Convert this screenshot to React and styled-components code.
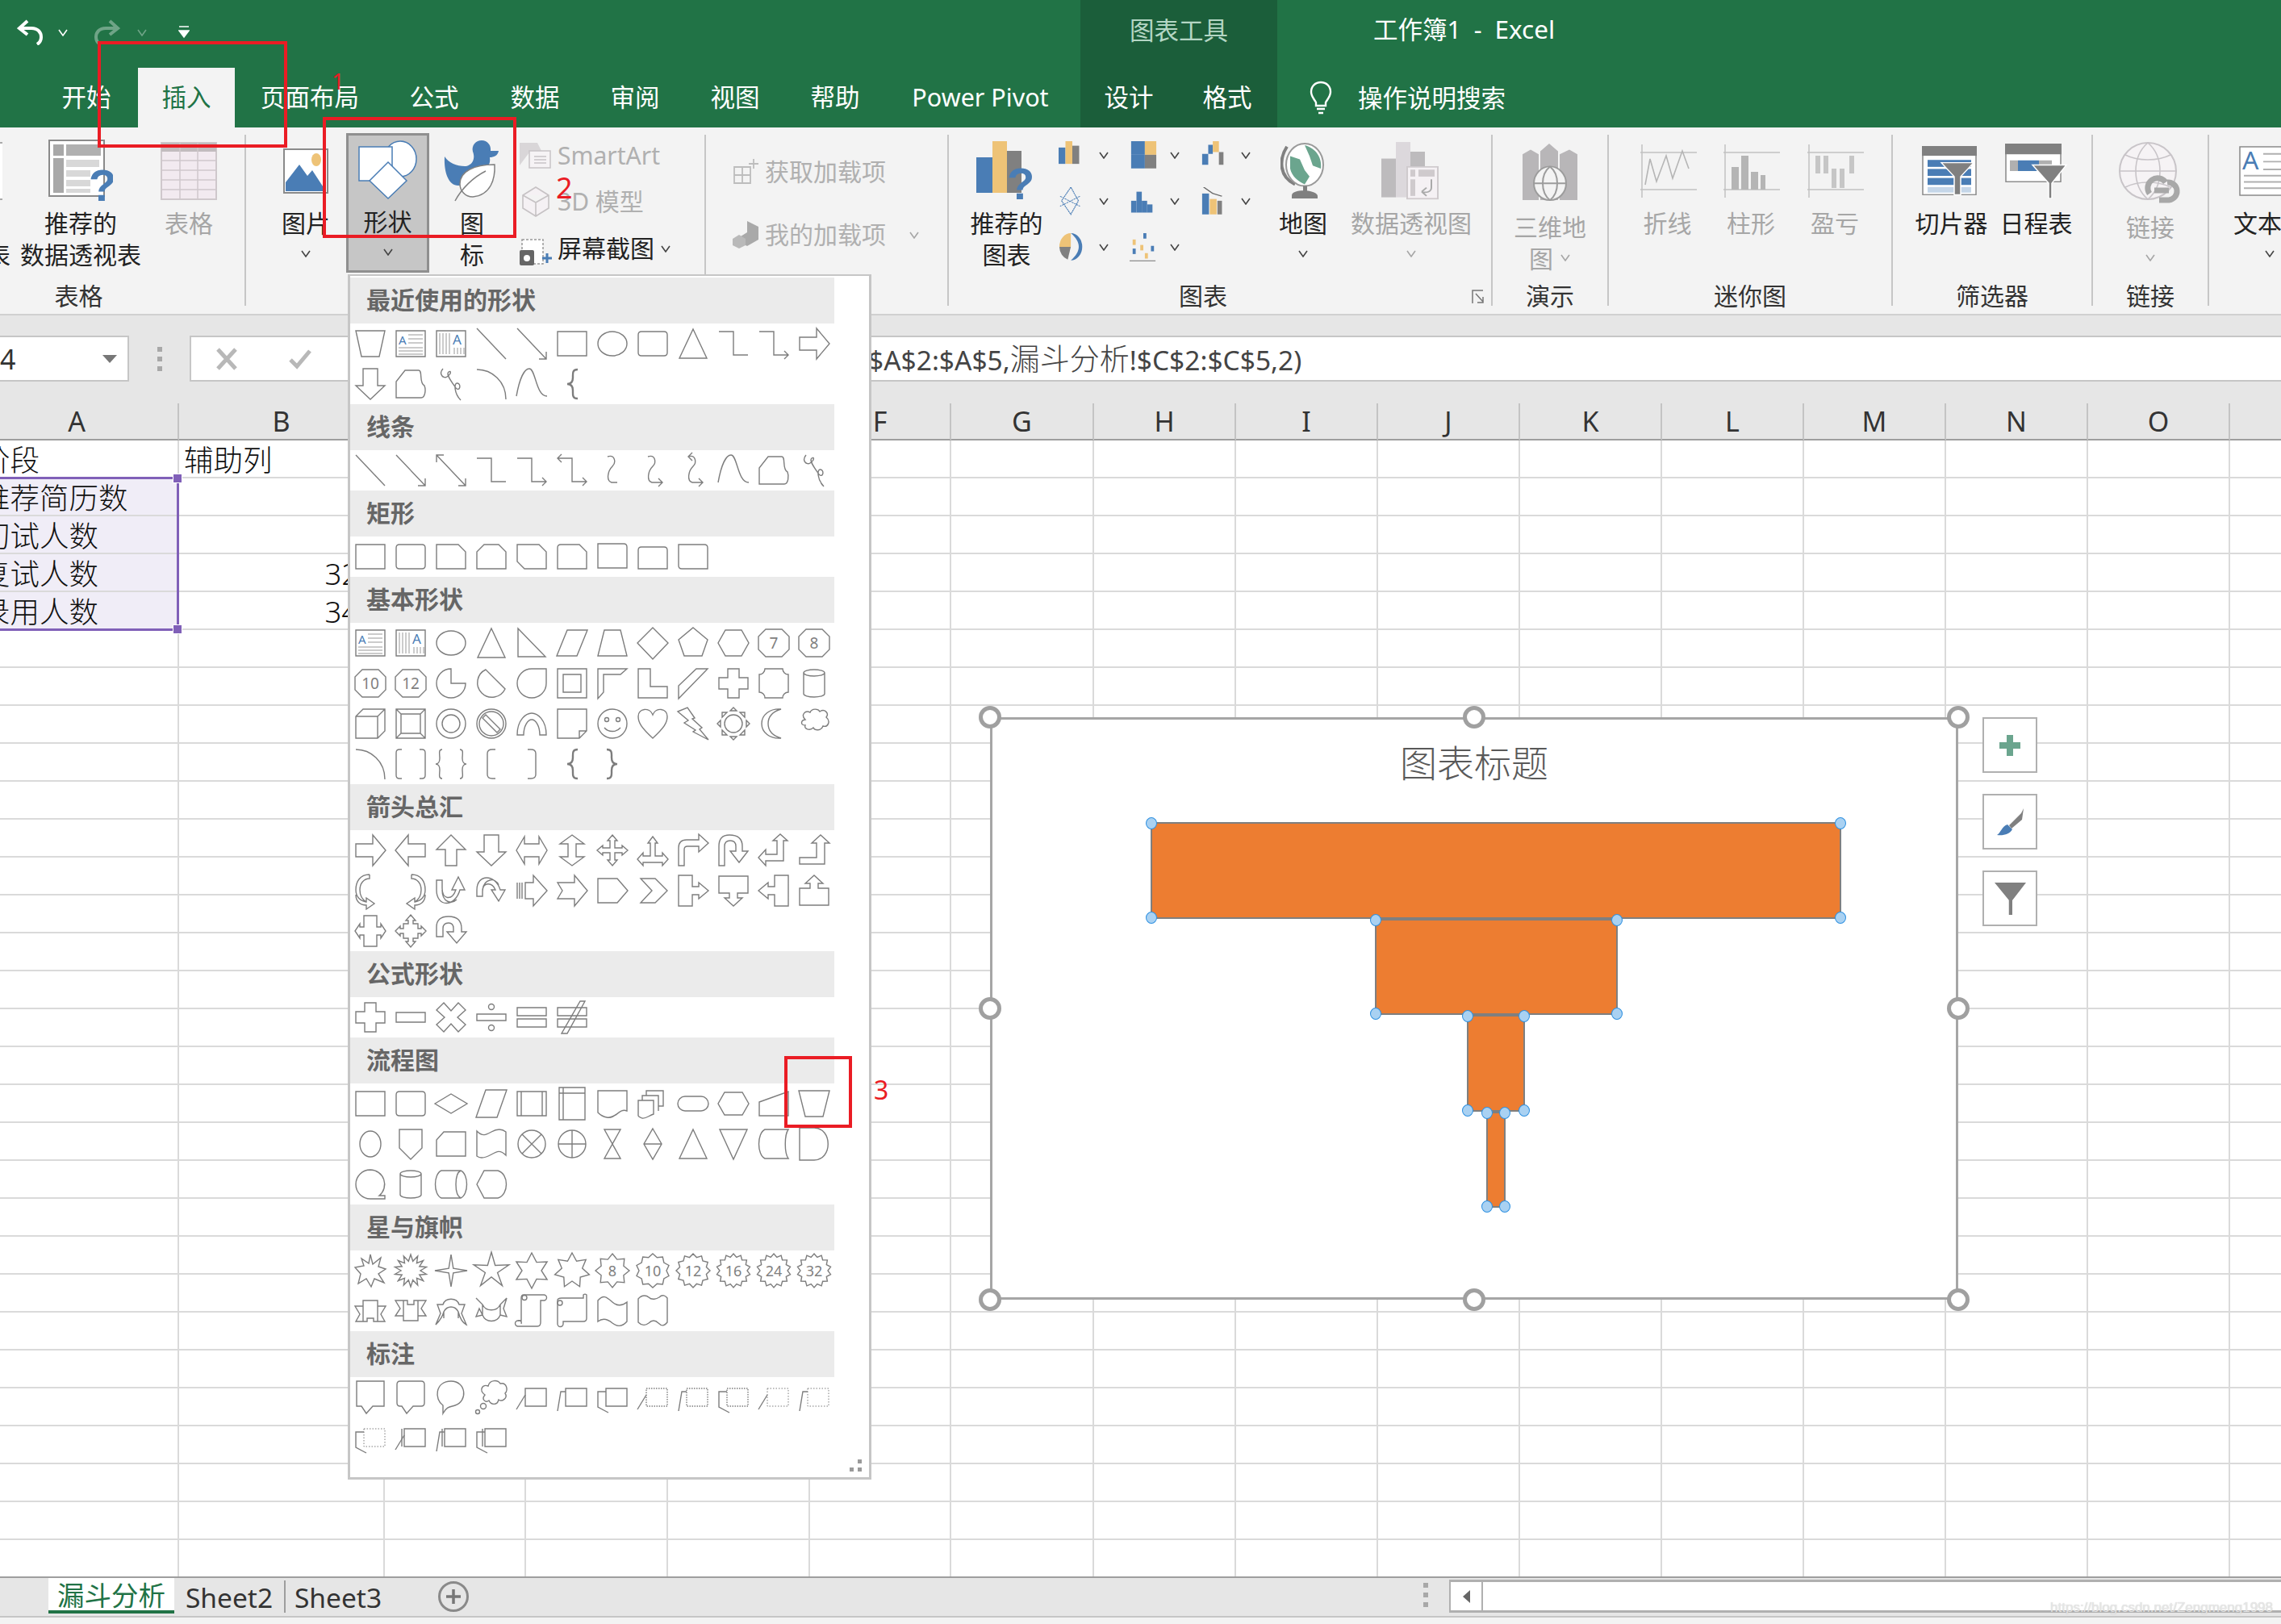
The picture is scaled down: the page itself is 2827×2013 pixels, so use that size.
import React from 'react';
import styled, { createGlobalStyle } from 'styled-components';

const GlobalStyle = createGlobalStyle`
  html, body { margin: 0; padding: 0; background: #fff; }
  body {
    width: 2827px;
    height: 2013px;
    overflow: hidden;
    font-family: "Noto Sans", "Noto Sans CJK SC", sans-serif;
  }
`;

const BLUE = '#4a7db5';
const YELLOW = '#eec377';
const GRAY = '#808080';
const GREEN = '#6ba58e';

// ---------- shape gallery ----------

const star = (n, R, r, cx = 25, cy = 25) => {
  let d = '';
  for (let i = 0; i < n * 2; i++) {
    const a = (Math.PI * i) / n - Math.PI / 2;
    const rad = i % 2 ? r : R;
    d += `${i ? 'L' : 'M'}${(cx + rad * Math.cos(a)).toFixed(1)} ${(cy + rad * Math.sin(a)).toFixed(1)}`;
  }
  return d + 'Z';
};

const RECT = 'M7 10H43V40H7Z';
const ROUND = 'M11 10H39Q43 10 43 14V36Q43 40 39 40H11Q7 40 7 36V14Q7 10 11 10Z';
const TRI = 'M25 7L42 43H8Z';
const LBRACE = 'M32 7C25 7 26 12 26 17C26 22 24 25 19 25C24 25 26 28 26 33C26 38 25 43 32 43';
const RBRACE = 'M18 7C25 7 24 12 24 17C24 22 26 25 31 25C26 25 24 28 24 33C24 38 25 43 18 43';
const SCRIBBLE = 'M15 6C9 13 16 19 20 16C26 12 25 8 22 10C18 13 27 24 31 30C36 35 38 25 33 24C28 23 29 37 37 45';
const FREEFORM = 'M7 42V22L18 8H35C40 8 35 24 42 27C44 32 43 42 38 42Z';
const SCURVE = 'M6 40C10 18 16 6 22 6C30 6 30 40 44 40';
const ARC = 'M7 7C26 7 43 22 43 44';
const CLOUD = 'M14 20C8 14 14 8 20 11C22 6 30 6 32 10C38 6 44 12 40 17C46 22 42 30 36 28C34 34 26 34 24 30C20 34 12 32 14 27C8 27 8 21 14 20Z';

const CanShape = () => <path d="M12 12A13 4 0 0 1 38 12V38A13 4 0 0 1 12 38ZM12 12A13 4 0 0 0 38 12" />;

const TextBox = () => (
  <>
    <path d="M7 9H43V41H7Z" />
    <text x="10" y="26" fontSize="15" fill={BLUE} stroke="none" fontFamily="Noto Sans">A</text>
    <path d="M22 14H40M22 19H40M22 24H40M10 30H40M10 34H40M10 38H40" strokeWidth="0.8" />
  </>
);

const VertBox = () => (
  <>
    <path d="M7 9H43V41H7Z" />
    <text x="27" y="26" fontSize="17" fill={BLUE} stroke="none" fontFamily="Noto Sans">A</text>
    <path d="M11 12V38M15 12V38M19 12V38M23 12V38M29 30V38M33 30V38M37 30V38M41 30V38" strokeWidth="0.8" />
  </>
);

const NumOct = ({ n }) => (
  <>
    <path d="M15 8H35L44 17V33L35 42H15L6 33V17Z" />
    <text x="25" y="32" fontSize="19" textAnchor="middle" fill={GRAY} stroke="none" fontFamily="Noto Sans">{n}</text>
  </>
);

const NumStar = ({ pts, n, r = 17 }) => (
  <>
    <path d={star(pts, 21, r)} />
    <text x="25" y="32" fontSize="18" textAnchor="middle" fill={GRAY} stroke="none" fontFamily="Noto Sans">{n}</text>
  </>
);

const LineCallout = ({ kind, box, bar }) => {
  const leader = {
    1: 'M17 22L6 40',
    2: 'M17 18H11L7 42',
    3: 'M17 18H7V37L20 44',
  }[kind];
  const dash = box === 'dot' ? '1.5 1.5' : box === 'light' ? '1.5 2' : undefined;
  return (
    <>
      <path d="M17 14H43V36H17Z" strokeDasharray={dash} strokeWidth={box === 'light' ? 1 : undefined} />
      {bar && <path d="M14 14V36" />}
      <path d={leader} />
    </>
  );
};

const shapes = {
  trap: <path d="M7 9H43L36 41H14Z" />,
  text: <TextBox />,
  vtext: <VertBox />,
  line: <path d="M7 6L43 44" />,
  lineA: <path d="M7 6L43 44M43 35V44H34" />,
  lineD: <path d="M7 6L43 44M43 35V44H34M7 15V6H16" />,
  rect: <path d={RECT} />,
  round: <path d={ROUND} />,
  ellipse: <ellipse cx="25" cy="25" rx="18" ry="15" />,
  tri: <path d={TRI} />,
  elbow: <path d="M7 10H25V39H43" />,
  elbowA: <path d="M7 10H25V39H43M38 34L43 39L38 44" />,
  elbowD: <path d="M7 10H25V39H43M38 34L43 39L38 44M12 5L7 10L12 15" />,
  right: <path d="M7 17H28V6L44 25L28 44V33H7Z" />,
  left: <path d="M43 17H22V6L6 25L22 44V33H43Z" />,
  up: <path d="M25 6L43 24H32V44H18V24H7Z" />,
  down: <path d="M16 6H34V27H43L25 44L7 27H16Z" />,
  free: <path d={FREEFORM} />,
  scrib: <path d={SCRIBBLE} />,
  arc: <path d={ARC} />,
  scurve: <path d={SCURVE} />,
  lb: <path d={LBRACE} strokeWidth="2.4" />,
  rb: <path d={RBRACE} strokeWidth="2.4" />,
  curve: <path d="M19 8C28 5 30 15 25 20C19 26 17 38 24 40H31" />,
  curveA: <path d="M19 8C28 5 30 15 25 20C19 26 17 38 24 40H37M32 35L37 40L32 45" />,
  curveD: <path d="M19 8C28 5 30 15 25 20C19 26 17 38 24 40H37M32 35L37 40L32 45M24 3L19 8L24 13" />,
  snip1: <path d="M7 10H34L43 19V40H7Z" />,
  snip2: <path d="M16 10H34L43 19V40H7V19Z" />,
  snipD: <path d="M7 10H34L43 19V40H16L7 31Z" />,
  snipR: <path d="M11 10H34L43 19V40H7V14Q7 10 11 10Z" />,
  round1: <path d="M7 9H39Q43 9 43 13V39H7Z" />,
  round2: <path d="M11 13H39Q43 13 43 17V40H7V17Q7 13 11 13Z" />,
  roundD: <path d="M7 10H39Q43 10 43 14V40H11Q7 40 7 36Z" />,
  rtTri: <path d="M8 7L42 42H8Z" />,
  para: <path d="M6 41L19 9H44L31 41Z" />,
  trapz: <path d="M7 41L15 9H35L43 41Z" />,
  diamond: <path d="M25 6L44 25L25 45L6 25Z" />,
  penta: <path d="M25 6L43 21L36 41H14L7 21Z" />,
  hexa: <path d="M15 9H35L44 25L35 41H15L6 25Z" />,
  o7: <NumOct n="7" />,
  o8: <NumOct n="8" />,
  o10: <NumOct n="10" />,
  o12: <NumOct n="12" />,
  pie: <path d="M25 7A18 18 0 1 0 43 25H25Z" />,
  chord: <path d="M18 8A18 18 0 1 0 42 32Z" />,
  drop: <path d="M43 7V25A18 18 0 1 1 25 7Z" />,
  frame: <path d="M7 7H43V43H7ZM14 14H36V36H14Z" />,
  half: <path d="M7 44V7H43L35 14H14V36Z" />,
  lshape: <path d="M7 7H22V29H43V43H7Z" />,
  diag: <path d="M7 44V28L29 7H43Z" />,
  plus: <path d="M18 7H32V18H43V32H32V43H18V32H7V18H18Z" />,
  plaque: <path d="M14 7H36A7 7 0 0 0 43 14V36A7 7 0 0 0 36 43H14A7 7 0 0 0 7 36V14A7 7 0 0 0 14 7Z" />,
  can: <CanShape />,
  cube: <path d="M7 16L16 7H43V34L34 43H7ZM7 16H34V43M34 16L43 7" />,
  bevel: <path d="M7 7H43V43H7ZM13 13H37V37H13ZM7 7L13 13M43 7L37 13M7 43L13 37M43 43L37 37" />,
  donut: <><circle cx="25" cy="25" r="18" /><circle cx="25" cy="25" r="11" /></>,
  no: <><circle cx="25" cy="25" r="18" /><circle cx="25" cy="25" r="15" /><path d="M14 18L18 14L36 32L32 36Z" /></>,
  block: <path d="M7 39C7 20 18 12 25 12C32 12 43 20 43 39H35C35 28 30 20 25 20C20 20 15 28 15 39Z" />,
  fold: <path d="M7 7H43V34L34 43H7ZM43 34H34V43" />,
  smile: <><circle cx="25" cy="25" r="18" /><circle cx="18" cy="20" r="2.5" /><circle cx="32" cy="20" r="2.5" /><path d="M15 30C20 36 30 36 35 30" /></>,
  heart: <path d="M25 43C11 30 7 24 7 16C7 6 21 4 25 14C29 4 43 6 43 16C43 24 39 30 25 43Z" />,
  bolt: <path d="M6 10L18 5L27 18L24 19L36 30L33 32L44 45L25 35L28 33L14 24L19 21Z" />,
  sun: <><circle cx="25" cy="25" r="11" /><path d="M25 5L29 9H21ZM25 45L29 41H21ZM5 25L9 21V29ZM45 25L41 21V29ZM11 11L17 11L11 17ZM39 11L33 11L39 17ZM11 39L17 39L11 33ZM39 39L33 39L39 33Z" /></>,
  moon: <path d="M34 7C24 10 18 16 18 25C18 34 24 40 34 43C20 44 10 36 10 25C10 14 20 6 34 7Z" />,
  cloud: <path d={CLOUD} />,
  brackets: <path d="M14 7H11Q7 7 7 11V39Q7 43 11 43H14M36 7H39Q43 7 43 11V39Q43 43 39 43H36" />,
  braces: <path d="M14 7C9 7 11 13 11 18C11 22 9 25 6 25C9 25 11 28 11 32C11 37 9 43 14 43M36 7C41 7 39 13 39 18C39 22 41 25 44 25C41 25 39 28 39 32C39 37 41 43 36 43" />,
  lbkt: <path d="M30 7H26Q20 7 20 12V38Q20 43 26 43H30" />,
  rbkt: <path d="M20 7H24Q30 7 30 12V38Q30 43 24 43H20" />,
  lr: <path d="M6 25L16 8V17H34V8L44 25L34 42V33H16V42Z" />,
  ud: <path d="M25 6L40 17H30V33H40L25 44L10 33H20V17H10Z" />,
  quad: <path d="M25 6L31 13H28V22H37V19L44 25L37 31V28H28V37H31L25 44L19 37H22V28H13V31L6 25L13 19V22H22V13H19Z" />,
  lru: <path d="M25 8L31 16H28V32H37V28L44 36L37 44V40H13V44L6 36L13 28V32H22V16H19Z" />,
  bent: <path d="M7 44V22Q7 12 17 12H32V5L44 16L32 27V20H18Q14 20 14 24V44Z" />,
  uturn: <path d="M7 44V20Q7 6 20 6Q36 6 36 20V26H43L32 40L21 26H28V20Q28 13 21 13Q14 13 14 20V44Z" />,
  leftup: <path d="M6 34L15 24V30H29V13H24L33 5L42 13H37V38H15V44Z" />,
  bentup: <path d="M7 42V34H28V16H22L33 6L44 16H38V42Z" />,
  cvR: <path d="M24 5C12 5 7 14 7 24C7 33 13 38 20 39V34L30 41L20 48V43C12 43 7 38 7 30M24 5V10C17 10 12 16 12 24C12 31 15 36 20 39" />,
  cvL: <path d="M26 5C38 5 43 14 43 24C43 33 37 38 30 39V34L20 41L30 48V43C38 43 43 38 43 30M26 5V10C33 10 38 16 38 24C38 31 35 36 30 39" />,
  cvU: <path d="M7 12V24C7 46 30 46 36 24H42L34 8L26 24H31C26 38 14 36 14 22V12ZM14 24C14 40 26 42 32 36" />,
  cvD: <path d="M7 32V24C7 4 30 4 36 24H42L34 38L25 24H30C26 14 14 14 14 26V32ZM14 24C16 10 30 8 34 18" />,
  striped: <path d="M17 15H27V6L44 25L27 44V35H17ZM7 15V35M10 15V35M13 15V35" />,
  notch: <path d="M7 15H28V6L44 25L28 44V35H7L13 25Z" />,
  home: <path d="M7 10H31L44 25L31 40H7Z" />,
  chev: <path d="M10 10H28L43 25L28 40H10L24 25Z" />,
  rightC: <path d="M7 6H24V20H32V15L44 25L32 35V30H24V44H7Z" />,
  downC: <path d="M7 7H43V28H30V34H36L25 44L14 34H20V28H7Z" />,
  leftC: <path d="M43 6H26V20H18V15L6 25L18 35V30H26V44H43Z" />,
  upC: <path d="M7 43H43V22H30V16H36L25 6L14 16H20V22H7Z" />,
  lrC: <path d="M17 6H33V20H38V16L44 25L38 34V30H33V44H17V30H12V34L6 25L12 16V20H17Z" />,
  quadC: <path d="M25 5L31 12H28V16H34V22H38V19L44 25L38 31V28H34V34H28V38H31L25 45L19 38H22V34H16V28H12V31L6 25L12 19V22H16V16H22V12H19Z" />,
  circ: <path d="M7 32V20Q7 7 22 7Q38 7 38 22V26H44L32 40L20 26H28V22Q28 15 22 15Q15 15 15 22V32Z" />,
  minus: <path d="M7 19H43V31H7Z" />,
  times: <path d="M16 7L25 17L34 7L43 16L33 25L43 34L34 43L25 33L16 43L7 34L17 25L7 16Z" />,
  divide: <><path d="M7 21H43V29H7Z" /><circle cx="25" cy="12" r="3.5" /><circle cx="25" cy="38" r="3.5" /></>,
  equal: <path d="M7 13H43V23H7ZM7 27H43V37H7Z" />,
  noteq: <path d="M7 13H43V23H7ZM7 27H43V37H7ZM35 5L41 5L19 45H12Z" />,
  decision: <path d="M5 25L25 13L45 25L25 37Z" />,
  data: <path d="M6 42L18 8H44L32 42Z" />,
  predef: <path d="M7 10H43V40H7ZM12 10V40M38 10V40" />,
  internal: <path d="M9 5H41V45H9ZM9 12H41M14 5V45" />,
  doc: <path d="M7 9H43V34C33 30 30 44 18 42C12 41 9 38 7 36Z" />,
  multi: <path d="M7 21H26V38C20 40 16 44 12 43C10 42 8 42 7 40ZM12 21V15H32V34M17 15V9H38V28H32" />,
  term: <path d="M15 16H35A9 9 0 0 1 35 34H15A9 9 0 0 1 15 16Z" />,
  prep: <path d="M14 11H36L44 25L36 39H14L6 25Z" />,
  manIn: <path d="M7 23L43 10V40H7Z" />,
  manOp: <path d="M6 9H44L36 41H14Z" />,
  conn: <ellipse cx="25" cy="25" rx="13" ry="16" />,
  off: <path d="M11 7H39V30L25 44L11 30Z" />,
  card: <path d="M16 10H43V40H7V20Z" />,
  tape: <path d="M7 9C14 16 18 14 25 10C32 6 38 6 43 10V39C36 32 32 34 25 38C18 42 12 44 7 40Z" />,
  sumj: <><circle cx="25" cy="25" r="17" /><path d="M13 13L37 37M37 13L13 37" /></>,
  or: <><circle cx="25" cy="25" r="17" /><path d="M25 8V42M8 25H42" /></>,
  collate: <path d="M15 7H35L15 43H35Z" />,
  sort: <path d="M25 6L36 25L25 44L14 25ZM14 25H36" />,
  merge: <path d="M8 7H42L25 44Z" />,
  stored: <path d="M14 7H43C38 14 38 36 43 43H14C4 38 4 12 14 7Z" />,
  delay: <path d="M7 5H25C48 5 48 45 25 45H7Z" />,
  seq: <path d="M25 7A18 18 0 1 0 25 43H43V39H36A18 18 0 0 0 25 7Z" />,
  direct: <path d="M13 8H37C47 12 47 38 37 42H13C3 38 3 12 13 8ZM37 8C29 12 29 38 37 42" />,
  display: <path d="M7 25L16 8H33C47 12 47 38 33 42H16Z" />,
  burst1: <path d="M25 5L28 17L38 9L35 20L44 23L35 29L42 40L30 35L26 45L20 35L10 41L13 29L6 21L17 19L14 10L23 16Z" />,
  burst2: <path d={star(14, 20, 12)} />,
  s4: <path d={star(4, 20, 4)} />,
  s5: <path d={star(5, 23, 8)} />,
  s6: <path d={star(6, 22, 12)} />,
  s7: <path d={star(7, 22, 13)} />,
  s8: <NumStar pts={8} n="8" r={15} />,
  s10: <NumStar pts={10} n="10" />,
  s12: <NumStar pts={12} n="12" />,
  s16: <NumStar pts={14} n="16" />,
  s24: <NumStar pts={14} n="24" />,
  s32: <NumStar pts={14} n="32" />,
  ribD: <path d="M16 19H6L12 29L7 38H16M34 19H44L38 29L43 38H34M16 12H34V38H29V34H21V38H16Z" />,
  ribU: <path d="M16 12H6L12 22L6 31H16M34 12H44L38 22L44 31H34M16 12H21V17H29V12H34V37H16Z" />,
  ribCD: <path d="M16 26C14 34 8 40 6 42L12 28L8 17H15C18 8 32 8 35 17H42L38 28L44 42C40 40 36 34 34 26C30 18 20 18 16 26ZM16 26V34M34 26V34" />,
  ribCU: <path d="M6 9L14 17V30C18 40 32 40 36 30V17L44 9L40 22L44 32L36 30M14 30L6 32L10 22ZM14 17C18 26 32 26 36 17" />,
  scrollV: <><path d="M15 5H40A3 3 0 0 1 40 12H36V39Q36 44 32 44H8A3 3 0 0 1 8 37H12V9Q12 5 15 5Z" /><circle cx="16" cy="8.5" r="3" /><path d="M8 37A3 3 0 0 1 12 41" /></>,
  scrollH: <><path d="M7 12Q7 9 12 9H39V5A3 3 0 0 1 43 5V34Q43 38 39 38H14V41A3 3 0 0 1 7 41Z" /><circle cx="10" cy="15" r="3" /></>,
  wave: <path d="M7 12C14 4 18 8 25 14C32 20 38 18 43 14V38C36 46 30 44 25 40C18 34 12 34 7 38Z" />,
  dbl: <path d="M7 10C12 4 18 6 20 8C24 12 30 10 33 8C37 4 41 6 43 9V39C39 44 36 44 32 40C28 36 24 36 20 40C15 44 10 42 7 39Z" />,
  callR: <path d="M8 5H42V36H28L20 45L14 36H8Z" />,
  callRd: <path d="M12 5H38Q42 5 42 9V32Q42 36 38 36H28L20 45L14 36H12Q8 36 8 32V9Q8 5 12 5Z" />,
  callO: <path d="M15 35C4 28 5 5 25 5C44 5 46 30 30 35C24 37 20 36 15 45Z" />,
  callC: <><path d="M17 22C9 16 14 8 21 11C23 3 33 3 36 8C44 6 46 16 42 20C46 26 38 31 34 28C32 36 24 34 22 29C18 32 12 28 17 22Z" /><circle cx="15" cy="36" r="3.5" /><circle cx="8" cy="43" r="2.5" /></>,
  c1: <LineCallout kind={1} />,
  c2: <LineCallout kind={2} />,
  c3: <LineCallout kind={3} />,
  d1: <LineCallout kind={1} box="dot" />,
  d2: <LineCallout kind={2} box="dot" />,
  d3: <LineCallout kind={3} box="dot" />,
  l1: <LineCallout kind={1} box="light" />,
  l2: <LineCallout kind={2} box="light" />,
  l3: <LineCallout kind={3} box="light" />,
  b1: <LineCallout kind={1} bar />,
  b2: <LineCallout kind={2} bar />,
  b3: <LineCallout kind={3} bar />,
};

const sections = [
  { title: '最近使用的形状', items: 'trap text vtext line lineA rect ellipse round tri elbow elbowA right down free scrib arc scurve lb' },
  { title: '线条', items: 'line lineA lineD elbow elbowA elbowD curve curveA curveD scurve free scrib' },
  { title: '矩形', items: 'rect round snip1 snip2 snipD snipR round1 round2 roundD' },
  { title: '基本形状', items: 'text vtext ellipse tri rtTri para trapz diamond penta hexa o7 o8 o10 o12 pie chord drop frame half lshape diag plus plaque can cube bevel donut no block fold smile heart bolt sun moon cloud arc brackets braces lbkt rbkt lb rb' },
  { title: '箭头总汇', items: 'right left up down lr ud quad lru bent uturn leftup bentup cvR cvL cvU cvD striped notch home chev rightC downC leftC upC lrC quadC circ' },
  { title: '公式形状', items: 'plus minus times divide equal noteq' },
  { title: '流程图', items: 'rect round decision data predef internal doc multi term prep manIn manOp conn off card tape sumj or collate sort tri merge stored delay seq can direct display' },
  { title: '星与旗帜', items: 'burst1 burst2 s4 s5 s6 s7 s8 s10 s12 s16 s24 s32 ribD ribU ribCD ribCU scrollV scrollH wave dbl' },
  { title: '标注', items: 'callR callRd callO callC c1 c2 c3 d1 d2 d3 l1 l2 l3 b1 b2 b3' },
];

const ShapeMenu = styled.div`
  position: absolute;
  left: 431px;
  top: 340px;
  width: 649px;
  height: 1494px;
  box-sizing: border-box;
  padding-top: 2px;
  background: #fff;
  border: 3px solid #c6c6c6;
  border-top-width: 2px;
`;

const MenuHeader = styled.div`
  width: 600px;
  height: 57px;
  padding-left: 20px;
  box-sizing: border-box;
  background: #ebebeb;
  color: #666;
  font: 700 30px/53px "Noto Sans CJK SC", sans-serif;
`;

const ShapeGrid = styled.div`
  width: 600px;
  display: grid;
  grid-template-columns: repeat(12, 50px);
  grid-auto-rows: 50px;
`;

const ShapeIcon = styled.svg`
  width: 50px;
  height: 50px;
  fill: none;
  stroke: #7d7d7d;
  stroke-width: 1.4;
`;

const Grip = styled.svg`
  position: absolute;
  right: 8px;
  bottom: 6px;
`;

// ---------- ribbon icons ----------

const Chev = styled(({ className, style }) => (
  <svg className={className} style={style} width="14" height="9" viewBox="0 0 14 9">
    <path d="M2 1L7 8L12 1" fill="none" stroke="currentColor" strokeWidth="1.6" />
  </svg>
))`
  flex: none;
  color: ${(p) => (p.$light ? '#fff' : p.$off ? '#a6a6a6' : '#444')};
`;

const RecoPivotIcon = () => (
  <svg width="80" height="78" viewBox="0 0 80 78">
    <rect x="1" y="1" width="68" height="69" fill="#fff" stroke="#8a8a8a" strokeWidth="2" />
    <rect x="6" y="6" width="13" height="14" fill="#a8a8a8" />
    <rect x="22" y="6" width="43" height="14" fill="#b0b0b0" />
    <rect x="6" y="23" width="13" height="43" fill="#a8a8a8" />
    <rect x="22" y="25" width="41" height="9" fill="#d8d8d8" />
    <rect x="22" y="38" width="30" height="8" fill="#d8d8d8" />
    <rect x="22" y="50" width="30" height="8" fill="#d8d8d8" />
    <rect x="22" y="61" width="30" height="5" fill="#d8d8d8" />
    <text x="50" y="76" fontSize="56" fontWeight="700" fill={BLUE} fontFamily="Liberation Sans">?</text>
  </svg>
);

const TableIcon = () => (
  <svg width="70" height="72" viewBox="0 0 70 72">
    <rect x="1" y="1" width="68" height="70" fill="#f2eaf0" stroke="#cfc8cc" strokeWidth="2" />
    <rect x="1" y="1" width="68" height="11" fill="#c2bcbe" />
    <path d="M24 1V71M46 1V71M1 23H69M1 35H69M1 47H69M1 59H69" stroke="#cfc8cc" strokeWidth="1.5" />
  </svg>
);

const PictureIcon = () => (
  <svg width="56" height="56" viewBox="0 0 56 56">
    <rect x="1" y="1" width="54" height="54" fill="#fff" stroke="#8a8a8a" strokeWidth="2" />
    <ellipse cx="41" cy="14" rx="6" ry="8" fill={YELLOW} />
    <path d="M3 53V42L20 20L30 34L36 27L53 53Z" fill={BLUE} />
  </svg>
);

const ShapesIcon = () => (
  <svg width="74" height="74" viewBox="0 0 74 74">
    <ellipse cx="52" cy="23" rx="20" ry="22" fill="#fff" stroke={BLUE} strokeWidth="1.5" />
    <rect x="1" y="8" width="41" height="42" fill="#fff" stroke={BLUE} strokeWidth="1.5" />
    <path d="M37 27L60 50L37 72L14 50Z" fill="#fff" stroke={BLUE} strokeWidth="1.5" />
  </svg>
);

const DuckIcon = () => (
  <svg width="70" height="76" viewBox="0 0 70 76">
    <path d="M36 14C34 6 40 0 47 0C54 0 59 6 58 13L68 13C67 19 62 21 57 21C58 28 56 32 50 36C42 46 30 56 18 56C6 56 0 40 1 20C6 28 16 32 26 32C34 32 40 24 36 14Z" fill={BLUE} />
    <path d="M20 54C20 38 38 30 63 30C64 48 58 68 36 70C26 70 20 62 20 54Z" fill="#fff" stroke="#808080" strokeWidth="1.5" />
    <path d="M14 75C22 60 36 46 52 38" fill="none" stroke="#808080" strokeWidth="1.5" />
  </svg>
);

const SmartArtIcon = () => (
  <svg width="40" height="32" viewBox="0 0 40 32">
    <path d="M0 0H22L28 12H12L0 28Z" fill="#d9d6d8" />
    <rect x="12" y="10" width="26" height="21" fill="#f6f3f5" stroke="#c8c4c6" strokeWidth="1.5" />
    <path d="M18 17H33M18 21H33M18 25H33" stroke="#c8c4c6" strokeWidth="1.5" />
  </svg>
);

const CubeIcon = () => (
  <svg width="34" height="38" viewBox="0 0 34 38">
    <path d="M17 1L33 11V27L17 37L1 27V11ZM1 11L17 20L33 11M17 20V37" fill="#f5f1f4" stroke="#c6c2c4" strokeWidth="1.6" />
  </svg>
);

const ScreenshotIcon = () => (
  <svg width="40" height="34" viewBox="0 0 40 34" style={{ marginTop: 10 }}>
    <rect x="3" y="1" width="26" height="30" fill="#fff" stroke="#999" strokeWidth="1.5" strokeDasharray="3 2" />
    <rect x="0" y="14" width="18" height="19" rx="2" fill="#666" />
    <circle cx="9" cy="24" r="4" fill="#fff" />
    <path d="M28 24H40M34 18V30" stroke={BLUE} strokeWidth="3" />
  </svg>
);

const StoreIcon = () => (
  <svg width="32" height="32" viewBox="0 0 32 32">
    <path d="M2 10H22V30H2ZM2 20H22M12 10V30M26 0V12M20 6H32" fill="none" stroke="#bdbdbd" strokeWidth="1.8" />
  </svg>
);

const AddinIcon = () => (
  <svg width="32" height="34" viewBox="0 0 32 34">
    <path d="M18 0L32 7V23L18 31L10 27V19L18 14Z" fill="#a9a9a9" />
    <path d="M8 17L16 22V30L8 34L0 30V22Z" fill="#b9b9b9" />
  </svg>
);

const RecoChartIcon = () => (
  <svg width="76" height="74" viewBox="0 0 76 74">
    <rect x="0" y="20" width="20" height="44" fill={BLUE} />
    <rect x="20" y="0" width="18" height="64" fill={YELLOW} />
    <rect x="38" y="12" width="18" height="52" fill={GRAY} />
    <text x="38" y="72" fontSize="56" fontWeight="700" fill={BLUE} fontFamily="Liberation Sans">?</text>
  </svg>
);

const bars = (list) => list.map(([x, y, w, h, c], i) => <rect key={i} x={x} y={y} width={w} height={h} fill={c} />);

const miniCharts = [
  bars([[0, 14, 9, 36, BLUE], [9, 0, 9, 50, YELLOW], [18, 10, 9, 40, GRAY]]),
  bars([[2, 0, 18, 30, BLUE], [20, 0, 15, 30, YELLOW], [2, 30, 18, 30, BLUE], [20, 30, 15, 30, GRAY]]),
  bars([[2, 28, 8, 24, BLUE], [10, 8, 6, 20, BLUE], [16, 0, 8, 24, YELLOW], [24, 24, 6, 28, GRAY]]),
  <path key="r" d="M16 0L4 30L16 60L26 30ZM2 20L28 42M28 20L2 42" fill="none" stroke={BLUE} strokeWidth="1.4" strokeDasharray="3 1" />,
  bars([[2, 30, 7, 26, BLUE], [9, 10, 7, 46, BLUE], [16, 30, 7, 26, BLUE], [23, 38, 7, 18, BLUE]]),
  <g key="c">{bars([[2, 14, 9, 46, BLUE], [12, 26, 9, 34, YELLOW], [22, 30, 6, 30, GRAY]])}<path d="M4 0L16 14L28 20" fill="none" stroke="#666" strokeWidth="2" /></g>,
  <g key="p"><path d="M16 0A15 30 0 0 1 16 60C30 40 30 20 16 0Z" fill={BLUE} /><path d="M16 0A15 30 0 0 0 1 30H16Z" fill={YELLOW} /><path d="M1 30A15 30 0 0 0 12 58L16 30Z" fill={GRAY} /></g>,
  <g key="s">{bars([[18, 0, 4, 12, BLUE], [4, 14, 4, 12, YELLOW], [14, 26, 4, 12, YELLOW], [28, 28, 4, 12, BLUE], [4, 34, 4, 12, BLUE], [20, 44, 4, 12, YELLOW]])}<rect x="0" y="60" width="34" height="2" fill={GRAY} /></g>,
];

const MiniChart = ({ i }) => (
  <svg width="34" height="36" viewBox="0 0 36 64" preserveAspectRatio="none">{miniCharts[i]}</svg>
);

const GlobeIcon = () => (
  <svg width="56" height="72" viewBox="0 0 56 74" preserveAspectRatio="none">
    <path d="M8 6C-2 22 -2 44 18 54" fill="none" stroke="#808080" strokeWidth="4" />
    <ellipse cx="30" cy="29" rx="23" ry="27" fill="#fff" stroke="#9a9a9a" strokeWidth="2" />
    <path d="M30 4C44 8 52 20 50 34L40 30L36 18ZM12 18L24 22L30 36L36 44L30 54C22 50 14 44 12 34Z" fill={GREEN} />
    <path d="M14 68C14 60 42 60 46 68V72H14Z" fill="#808080" />
    <rect x="28" y="56" width="5" height="8" fill="#808080" />
  </svg>
);

const PivotChartIcon = () => (
  <svg width="74" height="72" viewBox="0 0 74 84" preserveAspectRatio="none">
    <rect x="0" y="24" width="18" height="56" fill="#bdbbbd" />
    <rect x="18" y="0" width="18" height="80" fill="#dcd8dc" />
    <rect x="36" y="14" width="18" height="66" fill="#bdbbbd" />
    <rect x="32" y="36" width="38" height="46" fill="#f5f1f4" stroke="#cfcacd" strokeWidth="2" />
    <rect x="36" y="40" width="6" height="10" fill="#cfcacd" />
    <rect x="46" y="40" width="20" height="10" fill="#cfcacd" />
    <rect x="36" y="54" width="6" height="24" fill="#cfcacd" />
    <path d="M62 54V66C62 72 56 74 50 72M50 72L56 66M50 72L56 78" fill="none" stroke="#aaa" strokeWidth="2" />
  </svg>
);

const BuildingIcon = () => (
  <svg width="68" height="72" viewBox="0 0 68 76" preserveAspectRatio="none">
    <path d="M0 14L10 8L20 14V74H0ZM22 10L33 0L44 10V74H22ZM46 14L58 8L68 14V74H46Z" fill="#b8b6b8" />
    <ellipse cx="34" cy="52" rx="20" ry="22" fill="#f3f3f3" stroke="#9c9c9c" strokeWidth="2" />
    <path d="M14 52H54M34 30C22 40 22 64 34 74M34 30C46 40 46 64 34 74" fill="none" stroke="#9c9c9c" strokeWidth="2" />
  </svg>
);

const Spark = ({ children }) => (
  <svg width="72" height="66" viewBox="0 0 72 66">
    <path d="M2 10H72M2 56H72M4 0V66" fill="none" stroke="#c2c2c2" strokeWidth="1.5" />
    {children}
  </svg>
);

const SlicerIcon = () => (
  <svg width="74" height="62" viewBox="0 0 74 72" preserveAspectRatio="none">
    <rect x="1" y="12" width="66" height="58" fill="#fff" stroke="#888" strokeWidth="1.5" />
    <rect x="0" y="0" width="68" height="14" fill={GRAY} />
    <rect x="7" y="20" width="54" height="10" fill={BLUE} />
    <rect x="7" y="33" width="54" height="10" fill={BLUE} />
    <rect x="7" y="46" width="54" height="10" fill={BLUE} />
    <rect x="7" y="59" width="54" height="8" fill="#c5d6e8" />
    <path d="M24 24H64L48 44V70H40V44Z" fill={GRAY} stroke="#fff" strokeWidth="1.5" />
  </svg>
);

const TimelineIcon = () => (
  <svg width="78" height="68" viewBox="0 0 78 72" preserveAspectRatio="none">
    <rect x="1" y="10" width="68" height="40" fill="#fff" stroke="#888" strokeWidth="1.5" />
    <rect x="0" y="0" width="70" height="14" fill={GRAY} />
    <rect x="6" y="22" width="10" height="14" fill="#b0b0b0" />
    <rect x="16" y="22" width="26" height="14" fill={BLUE} />
    <rect x="42" y="22" width="16" height="14" fill="#b0b0b0" />
    <path d="M34 28H76L58 52V72H54V52Z" fill={GRAY} stroke="#fff" strokeWidth="1.5" />
  </svg>
);

const LinkIcon = () => (
  <svg width="78" height="76" viewBox="0 0 78 76">
    <ellipse cx="36" cy="36" rx="35" ry="35" fill="#f6f3f5" stroke="#c8c4c8" strokeWidth="2" />
    <path d="M1 36H71M36 1C16 18 16 54 36 71M36 1C56 18 56 54 36 71M8 16C24 24 48 24 64 16M8 56C24 48 48 48 64 56" fill="none" stroke="#c8c4c8" strokeWidth="1.6" />
    <path d="M38 64A11 11 0 0 1 58 50M60 50A11 11 0 0 1 62 72H50M44 60L62 60" fill="none" stroke="#a8a8a8" strokeWidth="7" />
  </svg>
);

const TextIcon = () => (
  <svg width="76" height="62" viewBox="0 0 76 64" preserveAspectRatio="none">
    <rect x="1" y="1" width="74" height="62" fill="#fff" stroke="#888" strokeWidth="1.5" />
    <text x="4" y="30" fontSize="32" fill={BLUE} fontFamily="Noto Sans">A</text>
    <path d="M30 10H70M30 20H70M30 30H70M6 38H70M6 46H70M6 54H70" stroke="#b0b0b0" strokeWidth="2" />
  </svg>
);

// ---------- layout ----------

const Page = styled.div`
  position: relative;
  width: 2827px;
  height: 2013px;
  overflow: hidden;
  display: flex;
  flex-direction: column;
`;

const TitleBar = styled.header`
  background: #217346;
  color: #fff;
  height: 158px;
  font-size: 30.5px;
`;

const TopRow = styled.div`
  height: 84px;
  display: flex;
`;

const QuickAccess = styled.div`
  width: 1339px;
  padding: 24px 0 0 21px;
  box-sizing: border-box;
  display: flex;
  align-items: flex-start;
  color: #fff;
`;

const QatSlot = styled.span`
  display: inline-flex;
  align-items: center;
  height: 32px;
  margin-left: ${(p) => p.$ml || 0}px;
  opacity: ${(p) => (p.$dim ? 0.35 : 1)};
`;

const ContextTitle = styled.div`
  width: 244px;
  background: #1b5e3a;
  color: #b4d6c4;
  text-align: center;
  line-height: 74px;
`;

const WindowTitle = styled.div`
  margin-left: 119px;
  line-height: 72px;
  white-space: pre;
`;

const ExcelWord = styled.span`
  font-size: 31.5px;
`;

const TabRow = styled.nav`
  height: 74px;
  display: flex;
  padding-left: 45px;
`;

const Tab = styled.div`
  width: ${(p) => p.$w || 124}px;
  margin-right: ${(p) => p.$mr || 0}px;
  box-sizing: border-box;
  text-align: center;
  line-height: 72px;
  white-space: nowrap;
  ${(p) => p.$active && 'background:#f3f3f3;color:#217346;margin:0 2px;width:120px;'}
`;

const ContextTabs = styled.div`
  display: flex;
  width: 244px;
  background: #1b5e3a;
  margin-right: 39px;
`;

const SearchHint = styled.div`
  display: flex;
  align-items: center;
  gap: 31px;
  line-height: 72px;
`;

const Ribbon = styled.section`
  height: 231px;
  background: #f3f3f3;
  border-bottom: 2px solid #d0d0d0;
  display: flex;
  overflow: hidden;
`;

const Group = styled.div`
  flex: none;
  position: relative;
  width: ${(p) => p.$w}px;
  height: 212px;
  margin-top: 9px;
  margin-left: ${(p) => p.$ml || 0}px;
  box-sizing: border-box;
  border-right: ${(p) => (p.$last ? 'none' : '2px solid #c6c6c6')};
  display: flex;
  flex-direction: column;
`;

const GroupBody = styled.div`
  display: flex;
  height: 172px;
  padding-left: ${(p) => p.$pl || 0}px;
`;

const GroupLabel = styled.div`
  height: 38px;
  margin-top: auto;
  margin-bottom: -6px;
  text-align: center;
  padding-right: ${(p) => p.$pr || 0}px;
  font: 30px/36px "Noto Sans CJK SC", sans-serif;
  color: #333;
`;

const Launcher = styled.svg`
  position: absolute;
  right: 8px;
  bottom: 2px;
`;

const BigButton = styled.div`
  flex: none;
  width: ${(p) => p.$w}px;
  height: ${(p) => (p.$active ? 173 : 172)}px;
  box-sizing: border-box;
  margin-top: ${(p) => (p.$active ? -2 : 0)}px;
  padding-top: ${(p) => (p.$active ? 2 : 0)}px;
  display: flex;
  flex-direction: column;
  align-items: center;
  font: 30px/39px "Noto Sans CJK SC", sans-serif;
  color: ${(p) => (p.$off ? '#a6a6a6' : '#222')};
  white-space: nowrap;
  ${(p) => p.$active && 'background:#c6c6c6;box-shadow:inset 0 0 0 3px #8f8f8f;'}
`;

const IconSlot = styled.div`
  height: ${(p) => p.$h}px;
  flex: none;
  display: flex;
  align-items: center;
  justify-content: center;
`;

const ButtonLine = styled.div`
  display: flex;
  align-items: center;
  justify-content: center;
  gap: 8px;
  height: 39px;
`;

const Stack = styled.div`
  display: flex;
  flex-direction: column;
  margin: ${(p) => p.$mt || 0}px 0 0 ${(p) => p.$ml || 0}px;
`;

const StackItem = styled.div`
  height: ${(p) => p.$h}px;
  display: flex;
  align-items: center;
  gap: ${(p) => p.$gap}px;
  font: 30px/1 "Noto Sans", "Noto Sans CJK SC", sans-serif;
  color: ${(p) => (p.$off ? '#b0b0b0' : '#222')};
  white-space: nowrap;
`;

const IconBox = styled.span`
  width: ${(p) => p.$w}px;
  display: flex;
  justify-content: center;
  flex: none;
`;

const ChartGrid = styled.div`
  flex: none;
  margin-top: -3px;
  height: 171px;
  display: grid;
  grid-template-columns: repeat(3, 88px);
  grid-auto-rows: 57px;
`;

const ChartCell = styled.div`
  display: flex;
  align-items: center;
  gap: 14px;
`;

const MiniIcon = styled.span`
  width: 36px;
  display: flex;
  align-items: center;
  justify-content: center;
`;

const Spacer = styled.span`
  flex: none;
  width: ${(p) => p.$w}px;
`;

const FormulaBar = styled.section`
  height: 109px;
  flex: none;
  box-sizing: border-box;
  padding-top: 25px;
  background: #e6e6e6;
  display: flex;
  align-items: flex-start;
`;

const NameBox = styled.div`
  width: 160px;
  height: 57px;
  box-sizing: border-box;
  background: #fff;
  border: 2px solid #c6c6c6;
  border-left: none;
  font: 34px/54px "Noto Sans", sans-serif;
  color: #333;
  display: flex;
  align-items: center;
  justify-content: space-between;
  padding-right: 13px;
`;

const Caret = styled.span`
  width: 0;
  height: 0;
  border: 9px solid transparent;
  border-top: 10px solid #777;
  border-bottom: none;
`;

const DragDots = styled.div`
  width: ${(p) => p.$w || 75}px;
  height: ${(p) => p.$h || 57}px;
  margin: 0 ${(p) => p.$mr || 0}px 0 ${(p) => p.$ml || 0}px;
  flex: none;
  display: flex;
  flex-direction: column;
  align-items: center;
  justify-content: center;
  gap: 6px;
  span { flex: none; width: 6px; height: 6px; background: #a8a8a8; }
`;

const FormulaInput = styled.div`
  flex: 1;
  height: 57px;
  box-sizing: border-box;
  background: #fff;
  border: 2px solid #c6c6c6;
  border-right: none;
  display: flex;
  align-items: center;
  padding-left: 30px;
  gap: 62px;
  font: 33.5px/1 "Noto Sans", "Noto Sans CJK SC", sans-serif;
  color: #444;
  white-space: nowrap;
`;

const FormulaText = styled.span`
  margin-left: 627px;
`;

const FormulaCjk = styled.span`
  font: 300 37px/1 "Noto Sans CJK SC", sans-serif;
`;

const Sheet = styled.section`
  position: relative;
  flex: 1;
  overflow: hidden;
  background: #fff;
`;

const SheetGrid = styled.div`
  margin-left: -30px;
  display: grid;
  grid-template-columns: 252px 255px 175px 176px 176px 175px 177px 176px 176px 176px 176px 176px 176px 176px 176px 176px 120px;
  grid-template-rows: 46px;
  grid-auto-rows: 47px;
`;

const ColHead = styled.div`
  background: #e6e6e6;
  border-bottom: 2px solid #9e9e9e;
  border-right: 2px solid #c4c4c4;
  color: #333;
  text-align: center;
  font: 34px/44px "Noto Sans", sans-serif;
`;

const Cell = styled.div`
  box-sizing: border-box;
  border-right: 2px solid #dadada;
  border-bottom: 2px solid #dadada;
  background: ${(p) => (p.$sel ? '#f0edf7' : '#fff')};
  padding: 0 ${(p) => (p.$num ? 10 : 6)}px 0 6px;
  font: 300 36.5px/49px "Noto Sans", "Noto Sans CJK SC", sans-serif;
  color: #111;
  white-space: nowrap;
  text-align: ${(p) => (p.$num ? 'right' : 'left')};
`;

const Selection = styled.div`
  position: absolute;
  left: -4px;
  top: 91px;
  width: 226px;
  height: 191px;
  box-sizing: border-box;
  border: 3px solid #8060b8;
  &::before, &::after {
    content: '';
    position: absolute;
    right: -7px;
    width: 10px;
    height: 10px;
    background: #8060b8;
    border: 1px solid #fff;
  }
  &::before { top: -7px; }
  &::after { bottom: -7px; }
`;

const SheetTabs = styled.footer`
  height: 47px;
  flex: none;
  background: #e6e6e6;
  border-top: 2px solid #9e9e9e;
  display: flex;
  align-items: flex-start;
  padding-left: 60px;
  font: 33.5px/42px "Noto Sans", "Noto Sans CJK SC", sans-serif;
  color: #333;
`;

const SheetTab = styled.div`
  box-sizing: border-box;
  width: ${(p) => p.$w}px;
  height: ${(p) => (p.$active ? 44 : 40)}px;
  margin-top: ${(p) => (p.$active ? 0 : 3)}px;
  text-align: center;
  white-space: nowrap;
  ${(p) => p.$active && 'background:#fff;color:#217346;border-bottom:4px solid #217346;'}
  ${(p) => p.$sep && 'border-right:2px solid #9e9e9e;'}
`;

const AddSheet = styled.div`
  width: 38px;
  height: 38px;
  margin: 4px 0 0 59px;
  box-sizing: border-box;
  border: 3px solid #8a8a8a;
  border-radius: 50%;
  display: flex;
  align-items: center;
  justify-content: center;
  flex: none;
  svg { display: block; }
`;

const ScrollArea = styled.div`
  margin-left: 1213px;
  flex: 1;
  display: flex;
  align-items: flex-start;
`;

const ScrollTrack = styled.div`
  flex: 1;
  height: 41px;
  margin-top: 2px;
  box-sizing: border-box;
  background: #fff;
  border-top: 3px solid #b0b0b0;
  border-bottom: 3px solid #b0b0b0;
  display: flex;
  align-items: center;
`;

const ScrollBtn = styled.div`
  width: 42px;
  height: 100%;
  box-sizing: border-box;
  border-right: 2px solid #b0b0b0;
  border-left: 2px solid #b0b0b0;
  display: flex;
  align-items: center;
  justify-content: center;
  &::before {
    content: '';
    border: 8px solid transparent;
    border-right: 9px solid #666;
    border-left: none;
  }
`;

const StatusBar = styled.div`
  height: 10px;
  flex: none;
  box-sizing: border-box;
  background: #f3f3f3;
  border-top: 2px solid #c6c6c6;
`;

const Watermark = styled.div`
  position: absolute;
  right: 10px;
  bottom: 12px;
  color: rgba(236, 236, 236, 0.85);
  font: 17px/1 "Liberation Sans", sans-serif;
  white-space: nowrap;
  text-shadow: 0 0 1px rgba(170, 170, 170, 0.7);
`;

const ChartWrap = styled.div`
  position: absolute;
  left: 1227px;
  top: 889px;
  display: flex;
  gap: 30px;
`;

const Chart = styled.div`
  position: relative;
  width: 1200px;
  height: 722px;
  box-sizing: border-box;
  background: #fff;
  box-shadow: inset 0 0 0 3px #a6a6a6;
  display: flex;
  flex-direction: column;
  align-items: center;
`;

const ChartTitle = styled.div`
  height: 130px;
  box-sizing: border-box;
  padding-top: 24px;
  font: 300 46px/60px "Noto Sans CJK SC", sans-serif;
  color: #595959;
`;

const Funnel = styled.div`
  display: flex;
  flex-direction: column;
  align-items: center;
  margin-left: 54px;
`;

const FunnelBar = styled.div`
  position: relative;
  width: ${(p) => p.$w}px;
  height: 119.5px;
  box-sizing: border-box;
  background: #ed7d31;
  border: 2px solid #7f7f7f;
`;

const Knob = styled.i`
  position: absolute;
  width: 14px;
  height: 15px;
  box-sizing: border-box;
  border-radius: 50%;
  background: #a9d1f2;
  border: 1.5px solid #2e90e0;
  ${(p) => (p.$y === 't' ? 'top:-8px;' : 'bottom:-8px;')}
  ${(p) => (p.$x === 'l' ? 'left:-8px;' : 'right:-8px;')}
`;

const Handle = styled.i`
  position: absolute;
  width: 28px;
  height: 28px;
  box-sizing: border-box;
  border-radius: 50%;
  background: #fff;
  border: 5px solid #a0a0a0;
  left: ${(p) => p.$x}%;
  top: ${(p) => p.$y}%;
  transform: translate(-50%, -50%);
`;

const ChartTools = styled.div`
  display: flex;
  flex-direction: column;
  gap: 26px;
`;

const ToolButton = styled.div`
  width: 68px;
  height: 69px;
  box-sizing: border-box;
  background: #fff;
  border: 2px solid #b0b0b0;
  display: flex;
  align-items: center;
  justify-content: center;
`;

const RedBox = styled.div`
  position: absolute;
  left: ${(p) => p.$x}px;
  top: ${(p) => p.$y}px;
  width: ${(p) => p.$w}px;
  height: ${(p) => p.$h}px;
  box-sizing: border-box;
  border: 4px solid #ea1c24;
`;

const RedNum = styled.div`
  position: absolute;
  left: ${(p) => p.$x}px;
  top: ${(p) => p.$y}px;
  color: #ea1c24;
  font: ${(p) => p.$s}px/1 "Noto Sans", sans-serif;
`;

const columns = 'ABCDEFGHIJKLMNOPQ'.split('');
const cellData = {
  '0-0': '阶段',
  '0-1': '辅助列',
  '1-0': '推荐简历数',
  '2-0': '初试人数',
  '3-0': '复试人数',
  '3-1': '320',
  '4-0': '录用人数',
  '4-1': '340',
};

const Btn = ({ w, off, active, low, icon, lines, chev }) => (
  <BigButton $w={w} $off={off} $active={active}>
    <IconSlot $h={89 + (low ? 5 : 0) - (active ? 2 : 0)}>{icon}</IconSlot>
    {lines.map((l) => (
      <ButtonLine key={l}>
        {l}
        {chev === 'inline' && l === lines[lines.length - 1] && <Chev $off={off} />}
      </ButtonLine>
    ))}
    {chev === true && (
      <ButtonLine>
        <Chev $off={off} />
      </ButtonLine>
    )}
  </BigButton>
);

export default function App() {
  return (
    <Page>
      <GlobalStyle />
      <TitleBar>
        <TopRow>
          <QuickAccess>
            <QatSlot>
              <svg width="34" height="32" viewBox="0 0 34 32">
                <path d="M13 2L3 11L13 19M4 11H18C26 11 30 16 30 22C30 26 28 29 25 31" fill="none" stroke="#fff" strokeWidth="4" />
              </svg>
            </QatSlot>
            <QatSlot $ml={16}><Chev $light /></QatSlot>
            <QatSlot $ml={30} $dim>
              <svg width="34" height="32" viewBox="0 0 34 32">
                <path d="M21 2L31 11L21 19M30 11H16C8 11 4 16 4 22C4 26 6 29 9 31" fill="none" stroke="#fff" strokeWidth="4" />
              </svg>
            </QatSlot>
            <QatSlot $ml={20} $dim><Chev $light /></QatSlot>
            <QatSlot $ml={38}>
              <svg width="14" height="18" viewBox="0 0 14 18">
                <path d="M1 2H13M1 7H13L7 15Z" fill="#fff" stroke="#fff" strokeWidth="1.5" />
              </svg>
            </QatSlot>
          </QuickAccess>
          <ContextTitle>图表工具</ContextTitle>
          <WindowTitle>工作簿1  -  <ExcelWord>Excel</ExcelWord></WindowTitle>
        </TopRow>
        <TabRow>
          <Tab>开始</Tab>
          <Tab $active>插入</Tab>
          <Tab $w={182}>页面布局</Tab>
          <Tab $w={126}>公式</Tab>
          <Tab>数据</Tab>
          <Tab>审阅</Tab>
          <Tab>视图</Tab>
          <Tab>帮助</Tab>
          <Tab $w={236} $mr={6}>Power Pivot</Tab>
          <ContextTabs>
            <Tab $w={120}>设计</Tab>
            <Tab>格式</Tab>
          </ContextTabs>
          <SearchHint>
            <svg width="30" height="42" viewBox="0 0 30 42">
              <path d="M9 27C6 22 3 19 3 14C3 7 8 2 15 2C22 2 27 7 27 14C27 19 24 22 21 27V31H9ZM10 35H20M12 40H18" fill="none" stroke="#fff" strokeWidth="2.4" />
            </svg>
            操作说明搜索
          </SearchHint>
        </TabRow>
      </TitleBar>

      <Ribbon>
        <Group $w={389} $ml={-84}>
          <GroupBody>
            <Btn w={104} icon={<svg width="70" height="72"><rect x="1" y="1" width="70" height="70" fill="#fff" stroke="#aaa" strokeWidth="2" /></svg>} lines={['数据', '透视表']} />
            <Btn w={160} icon={<RecoPivotIcon />} lines={['推荐的', '数据透视表']} />
            <Btn w={108} off icon={<TableIcon />} lines={['表格']} />
          </GroupBody>
          <GroupLabel $pr={24}>表格</GroupLabel>
        </Group>

        <Group $w={570}>
          <GroupBody $pl={24}>
            <Btn w={100} icon={<PictureIcon />} lines={['图片']} chev />
            <Btn w={103} active icon={<ShapesIcon />} lines={['形状']} chev />
            <Btn w={106} icon={<DuckIcon />} lines={['图', '标']} />
            <Stack $ml={6} $mt={-3}>
              <StackItem $off $h={57} $gap={7}><IconBox $w={40}><SmartArtIcon /></IconBox>SmartArt</StackItem>
              <StackItem $off $h={58} $gap={7}><IconBox $w={40}><CubeIcon /></IconBox>3D 模型</StackItem>
              <StackItem $h={58} $gap={7}><IconBox $w={40}><ScreenshotIcon /></IconBox>屏幕截图<Chev /></StackItem>
            </Stack>
          </GroupBody>
        </Group>

        <Group $w={301}>
          <GroupBody $pl={33}>
            <Stack $mt={7}>
              <StackItem $off $h={78} $gap={8}><IconBox $w={32}><StoreIcon /></IconBox>获取加载项</StackItem>
              <StackItem $off $h={78} $gap={8}><IconBox $w={32}><AddinIcon /></IconBox>我的加载项<Chev $off style={{ marginLeft: 20 }} /></StackItem>
            </Stack>
          </GroupBody>
        </Group>

        <Group $w={674}>
          <GroupBody $pl={8}>
            <Btn w={127} icon={<RecoChartIcon />} lines={['推荐的', '图表']} />
            <ChartGrid>
              {[0, 1, 2, 3, 4, 5, 6, 7].map((i) => (
                <ChartCell key={i}>
                  <MiniIcon><MiniChart i={i} /></MiniIcon>
                  <Chev />
                </ChartCell>
              ))}
            </ChartGrid>
            <Btn w={80} icon={<GlobeIcon />} lines={['地图']} chev />
            <Spacer $w={19} />
            <Btn w={150} off icon={<PivotChartIcon />} lines={['数据透视图']} chev />
          </GroupBody>
          <GroupLabel $pr={42}>图表</GroupLabel>
          <Launcher width="16" height="18" viewBox="0 0 16 18">
            <path d="M1 17V1H14M5 5L14 15M14 9V16H7" fill="none" stroke="#777" strokeWidth="1.5" />
          </Launcher>
        </Group>

        <Group $w={144}>
          <GroupBody>
            <Btn w={142} off low icon={<BuildingIcon />} lines={['三维地', '图']} chev="inline" />
          </GroupBody>
          <GroupLabel>演示</GroupLabel>
        </Group>

        <Group $w={352}>
          <GroupBody $pl={21}>
            <Btn w={103} off icon={<Spark><path d="M8 50L14 18L22 46L34 14L42 42L54 8L62 30" fill="none" stroke="#b5b5b5" strokeWidth="1.6" /></Spark>} lines={['折线']} />
            <Btn w={104} off icon={<Spark>{bars([[12, 28, 9, 28, '#b5b5b5'], [24, 14, 9, 42, '#b5b5b5'], [36, 34, 9, 22, '#b5b5b5'], [48, 38, 6, 18, '#b5b5b5']])}</Spark>} lines={['柱形']} />
            <Btn w={104} off icon={<Spark>{bars([[12, 14, 6, 22, '#c6c6c6'], [22, 14, 6, 22, '#c6c6c6'], [32, 30, 6, 24, '#c6c6c6'], [42, 30, 6, 24, '#c6c6c6'], [54, 14, 6, 22, '#c6c6c6']])}</Spark>} lines={['盈亏']} />
          </GroupBody>
          <GroupLabel>迷你图</GroupLabel>
        </Group>

        <Group $w={248}>
          <GroupBody $pl={20}>
            <Btn w={105} icon={<SlicerIcon />} lines={['切片器']} />
            <Btn w={105} icon={<TimelineIcon />} lines={['日程表']} />
          </GroupBody>
          <GroupLabel>筛选器</GroupLabel>
        </Group>

        <Group $w={144}>
          <GroupBody>
            <Btn w={142} off low icon={<LinkIcon />} lines={['链接']} chev />
          </GroupBody>
          <GroupLabel>链接</GroupLabel>
        </Group>

        <Group $w={150} $last>
          <GroupBody>
            <Btn w={150} icon={<TextIcon />} lines={['文本框']} chev />
          </GroupBody>
        </Group>
      </Ribbon>

      <FormulaBar>
        <NameBox>
          <span>4</span>
          <Caret />
        </NameBox>
        <DragDots><span /><span /><span /></DragDots>
        <FormulaInput>
          <svg width="28" height="28" viewBox="0 0 28 28">
            <path d="M3 2L25 26M25 2L3 26" stroke="#b8b8b8" strokeWidth="5" />
          </svg>
          <svg width="30" height="26" viewBox="0 0 30 26">
            <path d="M3 14L11 22L27 3" fill="none" stroke="#b8b8b8" strokeWidth="5" />
          </svg>
          <FormulaText>$A$2:$A$5,<FormulaCjk>漏斗分析</FormulaCjk>!$C$2:$C$5,2)</FormulaText>
        </FormulaInput>
      </FormulaBar>

      <Sheet>
        <SheetGrid>
          {columns.map((c) => (
            <ColHead key={c}>{c}</ColHead>
          ))}
          {Array.from({ length: 31 }, (_, r) =>
            columns.map((c, i) => (
              <Cell key={c + r} $sel={i === 0 && r >= 1 && r <= 4} $num={r >= 3 && i === 1}>
                {cellData[`${r}-${i}`]}
              </Cell>
            ))
          )}
        </SheetGrid>
        <Selection />
      </Sheet>

      <SheetTabs>
        <SheetTab $w={156} $active>漏斗分析</SheetTab>
        <SheetTab $w={138} $sep>Sheet2</SheetTab>
        <SheetTab $w={130}>Sheet3</SheetTab>
        <AddSheet>
          <svg width="18" height="18" viewBox="0 0 18 18">
            <path d="M9 0V18M0 9H18" stroke="#777" strokeWidth="3.5" />
          </svg>
        </AddSheet>
        <ScrollArea>
          <DragDots $w={6} $h={42} $ml={-30} $mr={26}><span /><span /><span /></DragDots>
          <ScrollTrack>
            <ScrollBtn />
          </ScrollTrack>
        </ScrollArea>
      </SheetTabs>
      <StatusBar />
      <Watermark>https://blog.csdn.net/Zengmeng1998</Watermark>

      <ChartWrap>
        <Chart>
          <ChartTitle>图表标题</ChartTitle>
          <Funnel>
            {[856, 301, 72, 24].map((w) => (
              <FunnelBar key={w} $w={w}>
                <Knob $x="l" $y="t" />
                <Knob $x="r" $y="t" />
                <Knob $x="l" $y="b" />
                <Knob $x="r" $y="b" />
              </FunnelBar>
            ))}
          </Funnel>
          {[[0, 0], [50, 0], [100, 0], [0, 50], [100, 50], [0, 100], [50, 100], [100, 100]].map(([x, y]) => (
            <Handle key={`${x}-${y}`} $x={x} $y={y} />
          ))}
        </Chart>
        <ChartTools>
          <ToolButton>
            <svg width="30" height="30" viewBox="0 0 30 30">
              <path d="M11 2H19V11H28V19H19V28H11V19H2V11H11Z" fill={GREEN} />
            </svg>
          </ToolButton>
          <ToolButton>
            <svg width="36" height="34" viewBox="0 0 36 34">
              <path d="M35 0L33 14L20 25L17 21L32 6Z" fill={GRAY} />
              <path d="M15 20L21 26C18 32 10 34 2 33C7 30 8 22 15 20Z" fill={BLUE} />
            </svg>
          </ToolButton>
          <ToolButton>
            <svg width="44" height="44" viewBox="0 0 44 44">
              <path d="M2 2H42L25 24V42H20V24Z" fill={GRAY} />
              <path d="M2 2L20 24V42" fill="none" stroke="#fff" strokeWidth="1.5" />
            </svg>
          </ToolButton>
        </ChartTools>
      </ChartWrap>

      <ShapeMenu>
        {sections.map((s) => (
          <React.Fragment key={s.title}>
            <MenuHeader>{s.title}</MenuHeader>
            <ShapeGrid>
              {s.items.split(' ').map((name, i) => (
                <ShapeIcon key={name + i} viewBox="0 0 50 50">{shapes[name]}</ShapeIcon>
              ))}
            </ShapeGrid>
          </React.Fragment>
        ))}
        <Grip width="16" height="16" viewBox="0 0 16 16">
          <path d="M10 0H15V5H10ZM0 10H5V15H0ZM10 10H15V15H10Z" fill="#9a9a9a" />
        </Grip>
      </ShapeMenu>

      <RedBox $x={121} $y={51} $w={235} $h={132} />
      <RedBox $x={400} $y={145} $w={240} $h={150} />
      <RedBox $x={972} $y={1309} $w={84} $h={89} />
      <RedNum $x={411} $y={86} $s={28}>1</RedNum>
      <RedNum $x={689} $y={215} $s={36}>2</RedNum>
      <RedNum $x={1083} $y={1335} $s={32}>3</RedNum>
    </Page>
  );
}
